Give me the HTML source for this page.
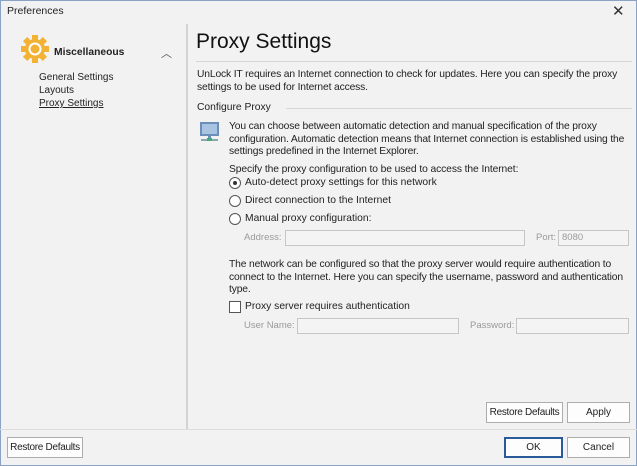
<!DOCTYPE html>
<html><head><style>
*{margin:0;padding:0;box-sizing:border-box}
html,body{width:637px;height:466px;overflow:hidden}
body{background:#f2f2f2;font-family:"Liberation Sans",sans-serif;font-size:10.3px;color:#222;position:relative}
.frame{position:absolute;left:0;top:0;width:637px;height:466px;border:1px solid #8aa2c4}
.a{position:absolute;white-space:nowrap}
.g{color:#9a9a9a}
.btn{position:absolute;border:1px solid #adadad;background:#fdfdfd;text-align:center;line-height:19px;font-size:10px;white-space:nowrap}
.inp{position:absolute;border:1px solid #c6c6c6;background:#f4f4f4;height:16px;font-size:9.5px;color:#999;padding-left:3px;line-height:14px}
.rad{position:absolute;width:12px;height:12px;border:1px solid #555;border-radius:50%;background:#fff}
.hl{position:absolute;height:1px;background:#d6d6d6}
</style></head><body>
<div class="frame"></div>
<div class="a" style="left:7px;top:5px;font-size:10.5px">Preferences</div>
<div class="a" style="left:612px;top:2px;font-size:15px;color:#333">✕</div>
<div style="position:absolute;left:186px;top:24px;width:2px;height:405px;background:#d4d4d4"></div>
<svg class="a" style="left:20px;top:34px" width="30" height="30" viewBox="0 0 30 30"><g fill="#f2b233"><circle cx="15" cy="15" r="10"/><g transform="translate(15 15)"><rect x="-3" y="-14" width="6" height="28"/><rect x="-3" y="-14" width="6" height="28" transform="rotate(45)"/><rect x="-3" y="-14" width="6" height="28" transform="rotate(90)"/><rect x="-3" y="-14" width="6" height="28" transform="rotate(135)"/></g></g><circle cx="15" cy="15" r="5.5" fill="none" stroke="#fff" stroke-width="2"/></svg>
<div class="a" style="left:54px;top:47px;font-weight:bold">Miscellaneous</div>
<div class="a" style="left:161px;top:45px;font-size:11px;color:#555">︿</div>
<div class="a" style="left:39px;top:72px;font-size:10px">General Settings</div>
<div class="a" style="left:39px;top:85px;font-size:10px">Layouts</div>
<div class="a" style="left:39px;top:98px;font-size:10px;text-decoration:underline">Proxy Settings</div>
<div class="a" style="left:196px;top:30px;font-size:21px;color:#111">Proxy Settings</div>
<div class="hl" style="left:196px;top:61px;width:436px"></div>
<div class="a" style="left:197px;top:68px;line-height:13px;letter-spacing:-0.15px">UnLock IT requires an Internet connection to check for updates. Here you can specify the proxy<br>settings to be used for Internet access.</div>
<div class="a" style="left:197px;top:102px">Configure Proxy</div>
<div class="hl" style="left:286px;top:108px;width:346px"></div>
<svg class="a" style="left:199px;top:121px" width="21" height="21" viewBox="0 0 21 21"><rect x="1" y="1" width="19" height="14" fill="#6b8fb8"/><rect x="3" y="3" width="15" height="10" fill="#a9c4e2"/><rect x="9" y="15" width="3" height="3" fill="#6b8fb8"/><rect x="2" y="18" width="17" height="2" fill="#8aa"/><rect x="8" y="17" width="5" height="3" fill="#4a7"/></svg>
<div class="a" style="left:229px;top:121px;line-height:12.5px;letter-spacing:-0.15px">You can choose between automatic detection and manual specification of the proxy<br>configuration. Automatic detection means that Internet connection is established using the<br>settings predefined in the Internet Explorer.</div>
<div class="a" style="left:229px;top:164px;letter-spacing:-0.1px">Specify the proxy configuration to be used to access the Internet:</div>
<div class="rad" style="left:229px;top:177px"><div style="position:absolute;left:3px;top:3px;width:4px;height:4px;border-radius:50%;background:#333"></div></div>
<div class="a" style="left:245px;top:177px">Auto-detect proxy settings for this network</div>
<div class="rad" style="left:229px;top:195px"></div>
<div class="a" style="left:245px;top:195px">Direct connection to the Internet</div>
<div class="rad" style="left:229px;top:213px"></div>
<div class="a" style="left:245px;top:213px">Manual proxy configuration:</div>
<div class="a g" style="left:244px;top:232px;font-size:9.5px">Address:</div>
<div class="inp" style="left:285px;top:230px;width:240px"></div>
<div class="a g" style="left:536px;top:232px;font-size:9.5px">Port:</div>
<div class="inp" style="left:558px;top:230px;width:71px">8080</div>
<div class="a" style="left:229px;top:259px;line-height:12.5px;letter-spacing:-0.15px">The network can be configured so that the proxy server would require authentication to<br>connect to the Internet. Here you can specify the username, password and authentication<br>type.</div>
<div style="position:absolute;left:229px;top:301px;width:12px;height:12px;border:1px solid #555;background:#fff"></div>
<div class="a" style="left:245px;top:301px">Proxy server requires authentication</div>
<div class="a g" style="left:244px;top:320px;font-size:9.5px">User Name:</div>
<div class="inp" style="left:297px;top:318px;width:162px"></div>
<div class="a g" style="left:470px;top:320px;font-size:9.5px">Password:</div>
<div class="inp" style="left:516px;top:318px;width:113px"></div>
<div class="btn" style="left:486px;top:402px;width:77px;height:21px;letter-spacing:-0.3px">Restore Defaults</div>
<div class="btn" style="left:567px;top:402px;width:63px;height:21px">Apply</div>
<div class="hl" style="left:0;top:429px;width:637px;background:#dcdcdc"></div>
<div class="btn" style="left:7px;top:437px;width:76px;height:21px;letter-spacing:-0.3px">Restore Defaults</div>
<div class="btn" style="left:504px;top:437px;width:59px;height:21px;border:1px solid #2b5a9a;box-shadow:inset 0 0 0 1px #2b5a9a">OK</div>
<div class="btn" style="left:567px;top:437px;width:63px;height:21px">Cancel</div>
</body></html>
